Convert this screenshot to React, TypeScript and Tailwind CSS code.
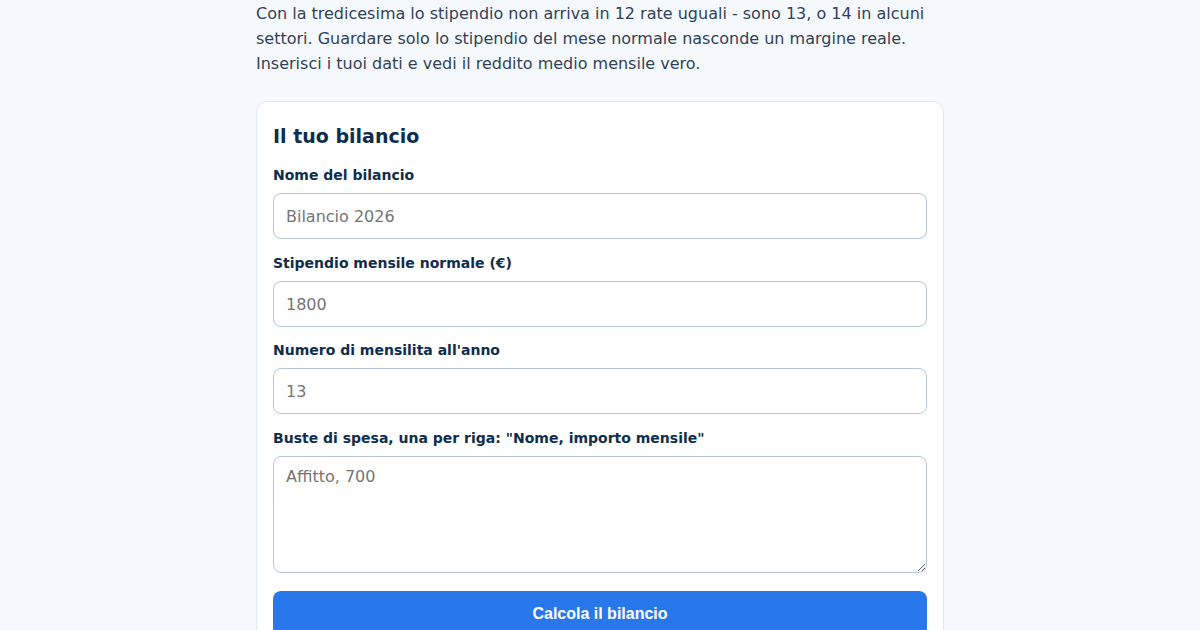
import { useState } from "react";

const labelCls = "block text-[14px] leading-[20px] font-bold text-[#0f2d4d] mb-2";
const inputCls =
  "block w-full h-[46px] rounded-lg border border-[#b9c5d8] bg-white px-3 text-[16px] text-[#1e293b] placeholder:text-[#757575] outline-none";

export default function App() {
  const [name, setName] = useState("");
  const [salary, setSalary] = useState("");
  const [months, setMonths] = useState("");
  const [envelopes, setEnvelopes] = useState("");

  return (
    <div
      className="min-h-screen bg-[#f5f9fd] text-[#334155]"
      style={{ fontFamily: '"DejaVu Sans", sans-serif' }}
    >
      <div className="mx-auto w-[688px]">
        <p className="text-[16px] leading-[25px] text-[#334155] pt-[1px]">
          Con la tredicesima lo stipendio non arriva in 12 rate uguali - sono 13, o 14 in alcuni
          settori. Guardare solo lo stipendio del mese normale nasconde un margine reale.
          Inserisci i tuoi dati e vedi il reddito medio mensile vero.
        </p>

        <form
          className="mt-[25px] rounded-xl border border-[#e3e9f1] bg-white px-4 pt-[20px] pb-6"
          onSubmit={e => e.preventDefault()}
        >
          <h2 className="text-[19px] leading-[28px] font-bold text-[#0f2d4d] mb-[15px]">
            Il tuo bilancio
          </h2>

          <div className="mb-[14px]">
            <label className={labelCls}>Nome del bilancio</label>
            <input className={inputCls} placeholder="Bilancio 2026"
                   value={name} onChange={e => setName(e.target.value)} />
          </div>
          <div className="mb-[13px]">
            <label className={labelCls}>Stipendio mensile normale (€)</label>
            <input className={inputCls} placeholder="1800"
                   value={salary} onChange={e => setSalary(e.target.value)} />
          </div>
          <div className="mb-[14px]">
            <label className={labelCls}>Numero di mensilita all'anno</label>
            <input className={inputCls} placeholder="13"
                   value={months} onChange={e => setMonths(e.target.value)} />
          </div>
          <div className="mb-[18px]">
            <label className={labelCls}>Buste di spesa, una per riga: "Nome, importo mensile"</label>
            <textarea
              className="block w-full h-[117px] rounded-lg border border-[#b9c5d8] bg-white px-3 py-[9px] text-[16px] leading-[22px] text-[#1e293b] placeholder:text-[#757575] outline-none"
              placeholder="Affitto, 700"
              value={envelopes}
              onChange={e => setEnvelopes(e.target.value)}
            />
          </div>

          <button
            type="submit"
            className="block w-full h-[46px] rounded-lg bg-[#2878ec] text-white text-[16px] font-bold"
            style={{ fontFamily: '"Liberation Sans", Arial, sans-serif' }}
          >
            Calcola il bilancio
          </button>
        </form>
      </div>
    </div>
  );
}
